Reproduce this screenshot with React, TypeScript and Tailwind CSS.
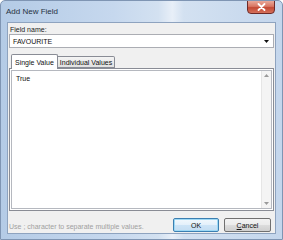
import React from "react";

export default function App() {
  return (
    <div
      className="relative w-[283px] h-[240px] overflow-hidden flex flex-col bg-[linear-gradient(90deg,#b4cbe6_0%,#c6d8ee_40%,#d3e1f1_56%,#e8eff8_61%,#d3e1f1_65%,#c4d6ec_100%)] border border-[#7f95b3] rounded-t-[5px]"
      style={{ fontFamily: '"Liberation Sans", Arial, sans-serif' }}
    >
      {/* Title bar */}
      <div className="h-[21px] flex items-center pl-[5px] pt-[1px] shrink-0">
        <span className="text-[8px] leading-[10px] text-[#26323f]">Add New Field</span>
      </div>
      {/* Close button */}
      <div className="absolute top-[-1px] right-[7px] w-[28px] h-[14px] rounded-b-[4px] border border-[#6d2a28] bg-[linear-gradient(180deg,#e9a99a_0%,#d87562_45%,#c34a35_55%,#d5715c_100%)] flex items-center justify-center">
        <svg width="9" height="8" viewBox="0 0 9 8">
          <path d="M1.5 1 L7.5 7 M7.5 1 L1.5 7" stroke="#ffffff" strokeWidth="1.8" strokeLinecap="round" />
        </svg>
      </div>

      {/* Client area */}
      <div className="mx-[6px] h-[212px] flex flex-col bg-[#f0f0f0] border border-[#8ea3bf] shrink-0">
        <div className="pt-[2px] pl-[2px] h-[11px] text-[7px] leading-[9px] text-[#222]">Field name:</div>
        {/* Combo */}
        <div className="mx-[1px] h-[14px] bg-white border border-[#abadb3] flex items-center justify-between pl-[3px] pr-[4px]">
          <span className="text-[7px] leading-[9px] text-[#111]">FAVOURITE</span>
          <svg width="5" height="3" viewBox="0 0 5 3">
            <path d="M0 0 H5 L2.5 3 Z" fill="#111" />
          </svg>
        </div>
        {/* Tabs */}
        <div className="mt-[7px] mx-[1px] h-[14px] flex items-end pl-[2px] relative z-10">
          <div className="h-[15px] px-[3px] bg-white border border-[#898c95] border-b-0 rounded-t-[2px] flex items-center">
            <span className="text-[7px] leading-[9px] text-[#111]">Single Value</span>
          </div>
          <div className="h-[12px] mb-[1px] px-[2px] bg-[linear-gradient(180deg,#f4f4f4,#e1e1e1)] border border-[#898c95] border-l-0 rounded-tr-[2px] flex items-center">
            <span className="text-[7px] leading-[9px] text-[#111]">Individual Values</span>
          </div>
        </div>
        {/* Panel */}
        <div className="mx-[1px] h-[143px] bg-white border border-[#898c95] p-[1px] -mt-[1px]">
          <div className="h-full border border-[#b5b8bf] flex">
            <div className="flex-1 pl-[4px] pt-[3px] text-[7px] leading-[9px] text-[#111]">True</div>
            <div className="w-[10px] bg-[#f4f4f4] border-l border-[#e6e6e6] flex flex-col justify-between items-center py-[3px]">
              <svg width="5" height="3" viewBox="0 0 5 3">
                <path d="M0 3 L2.5 0 L5 3 Z" fill="#9a9a9a" />
              </svg>
              <svg width="5" height="3" viewBox="0 0 5 3">
                <path d="M0 0 L2.5 3 L5 0 Z" fill="#9a9a9a" />
              </svg>
            </div>
          </div>
        </div>
        {/* Bottom row */}
        <div className="mt-[7px] h-[14px] flex items-center pr-[4px]">
          <span className="flex-1 text-[7px] leading-[9px] text-[#a0a0a0] pl-[1px] pt-[2px]">Use ; character to separate multiple values.</span>
          <div className="w-[46px] h-[14px] rounded-[2px] border border-[#3c7fb1] bg-[linear-gradient(180deg,#f2f8fd_0%,#e3f0fb_50%,#cde4f7_51%,#c4ddf2_100%)] shadow-[inset_0_0_0_1px_#9ed9f5] flex items-center justify-center">
            <span className="text-[7px] leading-[9px] text-[#111]">OK</span>
          </div>
          <div className="ml-[5px] w-[47px] h-[14px] rounded-[2px] border border-[#707070] bg-[linear-gradient(180deg,#f2f2f2_0%,#ebebeb_50%,#dddddd_51%,#cfcfcf_100%)] flex items-center justify-center">
            <span className="text-[7px] leading-[9px] text-[#111]"><span className="underline">C</span>ancel</span>
          </div>
        </div>
      </div>
    </div>
  );
}
